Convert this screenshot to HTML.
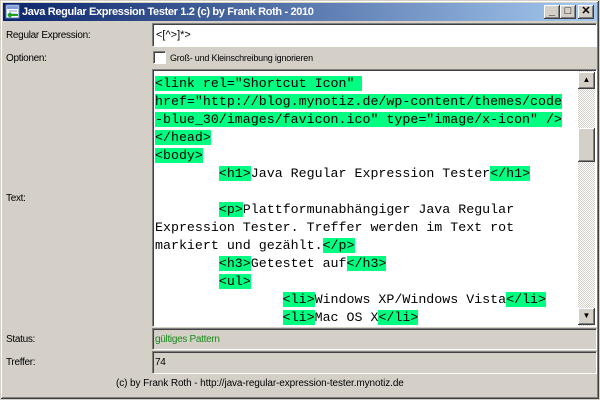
<!DOCTYPE html>
<html><head><meta charset="utf-8"><style>
*{margin:0;padding:0;box-sizing:border-box}
body{width:600px;height:400px;background:#d4d0c8;position:relative;overflow:hidden;font-family:"Liberation Sans",sans-serif;font-size:10px;letter-spacing:-0.3px;color:#000}
.win{position:absolute;left:0;top:0;width:600px;height:400px;border:1px solid #d4d0c8;box-shadow:inset -1px -1px #404040,inset 1px 1px #fff,inset -2px -2px #808080}
.title{position:absolute;left:3px;top:3px;width:594px;height:18px;background:linear-gradient(90deg,#0a246a,#a6caf0)}
.title span{position:absolute;left:19px;top:3px;color:#fff;font-weight:bold;font-size:11px;letter-spacing:-0.35px;white-space:nowrap}
.btn{position:absolute;top:2px;width:16px;height:14px;background:#d4d0c8;box-shadow:inset -1px -1px #404040,inset 1px 1px #fff,inset -2px -2px #808080;font-size:11px;text-align:center;line-height:13px;font-weight:bold;letter-spacing:0}
.lbl{position:absolute;left:6px;white-space:nowrap}
.field{position:absolute;left:152px;width:445px;border:1px solid;border-color:#808080 #fff #fff #808080}
pre{position:absolute;left:155px;top:75px;font-family:"Liberation Mono",monospace;font-size:13.3px;letter-spacing:0;line-height:18px;white-space:pre}
pre b{font-weight:normal;background:#00ff80}
</style></head><body>
<div class="win"></div>
<div class="title">
<svg style="position:absolute;left:2px;top:1px" width="16" height="16"><rect x="1" y="1" width="13" height="13" fill="#fff" stroke="#5a7ab8"/><rect x="2" y="2" width="11" height="3" fill="#7fa0d8"/><line x1="4" y1="7" x2="12" y2="7" stroke="#7fa0d8"/><line x1="4" y1="10" x2="12" y2="10" stroke="#7fa0d8"/><path d="M3 11 H13 M3 11 l3 -2 M3 11 l3 2" stroke="#20a020" stroke-width="2" fill="none"/></svg>
<span>Java Regular Expression Tester 1.2 (c) by Frank Roth - 2010</span>
<div class="btn" style="left:541px">_</div>
<div class="btn" style="left:557px">□</div>
<div class="btn" style="left:575px">✕</div>
</div>
<div class="lbl" style="top:30px">Regular Expression:</div>
<div class="field" style="top:23px;height:24px;background:#fff;box-shadow:inset 1px 1px #404040"><span style="position:absolute;left:3px;top:5px;font-size:11px;letter-spacing:0">&lt;[^&gt;]*&gt;</span></div>
<div class="lbl" style="top:53px">Optionen:</div>
<div style="position:absolute;left:153px;top:51px;width:13px;height:13px;background:#fff;border:1px solid;border-color:#808080 #fff #fff #808080;box-shadow:inset 1px 1px #404040"></div>
<div style="position:absolute;left:170px;top:53px;font-size:9px;letter-spacing:-0.2px">Groß- und Kleinschreibung ignorieren</div>
<div class="lbl" style="top:193px">Text:</div>
<div class="field" style="top:69px;height:258px;background:#fff;box-shadow:inset 1px 1px #404040;overflow:hidden"></div>
<pre><b>&lt;link rel="Shortcut Icon" </b>
<b>href="http://blog.mynotiz.de/wp-content/themes/code</b>
<b>-blue_30/images/favicon.ico" type="image/x-icon" /&gt;</b>
<b>&lt;/head&gt;</b>
<b>&lt;body&gt;</b>
        <b>&lt;h1&gt;</b>Java Regular Expression Tester<b>&lt;/h1&gt;</b>

        <b>&lt;p&gt;</b>Plattformunabhängiger Java Regular
Expression Tester. Treffer werden im Text rot
markiert und gezählt.<b>&lt;/p&gt;</b>
        <b>&lt;h3&gt;</b>Getestet auf<b>&lt;/h3&gt;</b>
        <b>&lt;ul&gt;</b>
                <b>&lt;li&gt;</b>Windows XP/Windows Vista<b>&lt;/li&gt;</b>
                <b>&lt;li&gt;</b>Mac OS X<b>&lt;/li&gt;</b></pre>
<div style="position:absolute;left:578px;top:71px;width:17px;height:255px;background:repeating-conic-gradient(#d4d0c8 0 25%,#fff 0 50%) 0 0/2px 2px"></div>
<div class="btn" style="left:578px;top:72px;width:17px;height:17px;line-height:16px;font-size:8px">▲</div>
<div class="btn" style="left:578px;top:128px;width:17px;height:34px"></div>
<div class="btn" style="left:578px;top:308px;width:17px;height:17px;line-height:16px;font-size:8px">▼</div>
<div class="lbl" style="top:334px">Status:</div>
<div class="field" style="top:328px;height:22px;box-shadow:inset 1px 1px #404040"><span style="position:absolute;left:2px;top:5px;color:#1a8a1a">gültiges Pattern</span></div>
<div class="lbl" style="top:357px">Treffer:</div>
<div class="field" style="top:351px;height:23px;box-shadow:inset 1px 1px #404040"><span style="position:absolute;left:2px;top:5px">74</span></div>
<div style="position:absolute;left:116px;top:378px;white-space:nowrap;letter-spacing:-0.1px">(c) by Frank Roth - http://java-regular-expression-tester.mynotiz.de</div>
</body></html>
